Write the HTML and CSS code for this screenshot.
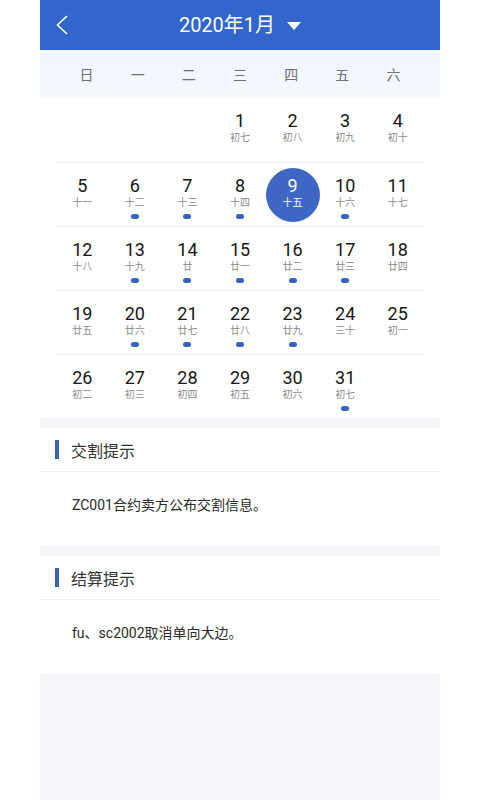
FILE: index.html
```html
<!DOCTYPE html>
<html lang="zh">
<head>
    <meta charset="UTF-8">
    <meta name="viewport" content="width=480, user-scalable=no">
    <title>交易日历</title>
    <link rel="stylesheet" href="styles.css">
</head>
<body>
    <div class="page">
        <header class="topbar">
            <div class="back">
                <svg width="12" height="20" viewBox="0 0 12 20"><path d="M11 1 L1.5 10 L11 19" fill="none" stroke="#fff" stroke-width="1.6"/></svg>
            </div>
            <div class="month">
                <span>2020年1月</span>
                <svg width="14" height="8" viewBox="0 0 14 8"><polygon points="0,0 14,0 7,8" fill="#fff"/></svg>
            </div>
            <div></div>
        </header>

        <div class="week">
            <span>日</span><span>一</span><span>二</span><span>三</span><span>四</span><span>五</span><span>六</span>
        </div>

        <div class="calendar">
            <div class="row">
                <div class="day"></div>
                <div class="day"></div>
                <div class="day"></div>
                <div class="day"><b>1</b><i>初七</i></div>
                <div class="day"><b>2</b><i>初八</i></div>
                <div class="day"><b>3</b><i>初九</i></div>
                <div class="day"><b>4</b><i>初十</i></div>
            </div>
            <div class="row">
                <div class="day"><b>5</b><i>十一</i></div>
                <div class="day dot"><b>6</b><i>十二</i></div>
                <div class="day dot"><b>7</b><i>十三</i></div>
                <div class="day dot"><b>8</b><i>十四</i></div>
                <div class="day active"><b>9</b><i>十五</i></div>
                <div class="day dot"><b>10</b><i>十六</i></div>
                <div class="day"><b>11</b><i>十七</i></div>
            </div>
            <div class="row">
                <div class="day"><b>12</b><i>十八</i></div>
                <div class="day dot"><b>13</b><i>十九</i></div>
                <div class="day dot"><b>14</b><i>廿</i></div>
                <div class="day dot"><b>15</b><i>廿一</i></div>
                <div class="day dot"><b>16</b><i>廿二</i></div>
                <div class="day dot"><b>17</b><i>廿三</i></div>
                <div class="day"><b>18</b><i>廿四</i></div>
            </div>
            <div class="row">
                <div class="day"><b>19</b><i>廿五</i></div>
                <div class="day dot"><b>20</b><i>廿六</i></div>
                <div class="day dot"><b>21</b><i>廿七</i></div>
                <div class="day dot"><b>22</b><i>廿八</i></div>
                <div class="day dot"><b>23</b><i>廿九</i></div>
                <div class="day"><b>24</b><i>三十</i></div>
                <div class="day"><b>25</b><i>初一</i></div>
            </div>
            <div class="row">
                <div class="day"><b>26</b><i>初二</i></div>
                <div class="day"><b>27</b><i>初三</i></div>
                <div class="day"><b>28</b><i>初四</i></div>
                <div class="day"><b>29</b><i>初五</i></div>
                <div class="day"><b>30</b><i>初六</i></div>
                <div class="day dot"><b>31</b><i>初七</i></div>
                <div class="day"></div>
            </div>
        </div>

        <div class="notice">
            <div class="notice-title">交割提示</div>
            <div class="notice-body">ZC001合约卖方公布交割信息。</div>
        </div>

        <div class="notice">
            <div class="notice-title">结算提示</div>
            <div class="notice-body">fu、sc2002取消单向大边。</div>
        </div>
    </div>
</body>
</html>
```

FILE: styles.css
```css
body, html {
    margin: 0;
    padding: 0;
    background-color: #ffffff;
    font-family: "Roboto", "Noto Sans CJK SC", sans-serif;
}

.page {
    width: 400px;
    margin: 0 auto;
    min-height: 100vh;
    background-color: #f5f6fa;
}

.topbar {
    height: 50px;
    background-color: #3366cc;
    display: grid;
    grid-template-columns: 1fr auto 1fr;
    align-items: center;
    color: white;
}
.back {
    padding-left: 16px;
    display: flex;
    align-items: center;
}
.month {
    display: flex;
    align-items: center;
    gap: 12px;
    font-size: 20px;
    line-height: 24px;
}
.month svg {
    margin-top: 1px;
}

.week {
    height: 48px;
    padding: 0 21px;
    display: grid;
    grid-template-columns: repeat(7, 1fr);
    align-items: center;
    text-align: center;
    background: linear-gradient(#f1f5fe, #f6f8fd);
    font-size: 14px;
    color: #707070;
}

.calendar {
    background-color: white;
    padding: 0 16px;
}
.row {
    height: 64px;
    display: grid;
    grid-template-columns: repeat(7, 1fr);
    box-sizing: border-box;
}
.row + .row {
    border-top: 1px solid #eeeeee;
}
.day {
    position: relative;
    display: flex;
    flex-direction: column;
    align-items: center;
    padding-top: 12px;
}
.day b {
    position: relative;
    font-weight: normal;
    font-size: 18px;
    line-height: 22px;
    color: #161616;
}
.day i {
    position: relative;
    font-style: normal;
    font-size: 10px;
    line-height: 12px;
    color: #8a8a8a;
}
.day.dot::after {
    content: '';
    width: 8px;
    height: 5px;
    margin-top: 5px;
    border-radius: 3px;
    background-color: #3a62c0;
}
.day.active::before {
    content: '';
    position: absolute;
    left: 50%;
    top: 50%;
    width: 54px;
    height: 54px;
    margin: -27px 0 0 -27px;
    border-radius: 50%;
    background-color: #3d66c5;
}
.day.active b, .day.active i {
    color: white;
}

.notice {
    margin-top: 10px;
    background-color: white;
}
.notice-title {
    height: 43px;
    display: flex;
    align-items: center;
    padding-left: 15px;
    gap: 12px;
    font-size: 16px;
    color: #333;
    border-bottom: 1px solid #eeeeee;
}
.notice-title::before {
    content: '';
    width: 4px;
    height: 19px;
    background-color: #3d5fb8;
}
.notice-body {
    padding: 22px 32px 30px;
    font-size: 14px;
    line-height: 22px;
    color: #2a2a2a;
}
```
